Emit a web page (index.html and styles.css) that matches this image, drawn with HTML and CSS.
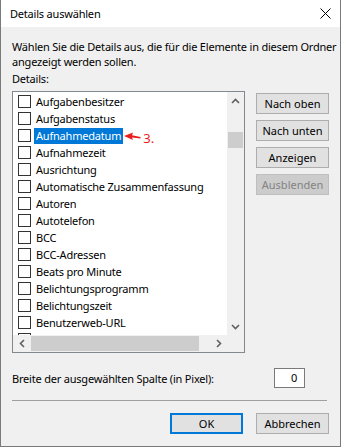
FILE: index.html
```html
<!DOCTYPE html>
<html lang="de">
<head>
<meta charset="utf-8">
<title>Details auswählen</title>
<link rel="stylesheet" href="styles.css">
</head>
<body>
<div class="window">
  <div class="titlebar">
    <span class="title">Details auswählen</span>
    <svg class="close" width="11" height="11" viewBox="0 0 11 11"><path d="M0.5 0.5 L10.5 10.5 M10.5 0.5 L0.5 10.5" stroke="#000" stroke-width="1" fill="none"/></svg>
  </div>
  <div class="content">
    <p class="intro">Wählen Sie die Details aus, die für die Elemente in diesem Ordner<br>angezeigt werden sollen.</p>
    <div class="label">Details:</div>
    <div class="main">
      <div class="list">
        <div class="items">
          <div class="row"><span class="cb"></span><span class="name">Aufgabenbesitzer</span></div>
          <div class="row"><span class="cb"></span><span class="name">Aufgabenstatus</span></div>
          <div class="row sel"><span class="cb"></span><span class="name">Aufnahmedatum</span><span class="anno"><svg width="17" height="10" viewBox="0 0 17 10"><path d="M0 4 L9 0.5 L8 3.3 L16.5 5 L16.5 6.4 L8 5.4 L9 8 Z" fill="#e8201c"/></svg><span class="anno-text">3.</span></span></div>
          <div class="row"><span class="cb"></span><span class="name">Aufnahmezeit</span></div>
          <div class="row"><span class="cb"></span><span class="name">Ausrichtung</span></div>
          <div class="row"><span class="cb"></span><span class="name">Automatische Zusammenfassung</span></div>
          <div class="row"><span class="cb"></span><span class="name">Autoren</span></div>
          <div class="row"><span class="cb"></span><span class="name">Autotelefon</span></div>
          <div class="row"><span class="cb"></span><span class="name">BCC</span></div>
          <div class="row"><span class="cb"></span><span class="name">BCC-Adressen</span></div>
          <div class="row"><span class="cb"></span><span class="name">Beats pro Minute</span></div>
          <div class="row"><span class="cb"></span><span class="name">Belichtungsprogramm</span></div>
          <div class="row"><span class="cb"></span><span class="name">Belichtungszeit</span></div>
          <div class="row"><span class="cb"></span><span class="name">Benutzerweb-URL</span></div>
          <div class="row"><span class="cb"></span></div>
        </div>
        <div class="vscroll">
          <div class="arrow"><svg width="9" height="6" viewBox="0 0 9 6"><path d="M1 5 L4.5 1.5 L8 5" stroke="#606060" stroke-width="1.6" fill="none"/></svg></div>
          <div class="vthumb"></div>
          <div class="spacer"></div>
          <div class="arrow"><svg width="9" height="6" viewBox="0 0 9 6"><path d="M1 1 L4.5 4.5 L8 1" stroke="#606060" stroke-width="1.6" fill="none"/></svg></div>
        </div>
        <div class="hscroll">
          <div class="harrow"><svg width="6" height="9" viewBox="0 0 6 9"><path d="M5 1 L1.5 4.5 L5 8" stroke="#606060" stroke-width="1.6" fill="none"/></svg></div>
          <div class="hthumb"></div>
          <div class="spacer"></div>
          <div class="harrow"><svg width="6" height="9" viewBox="0 0 6 9"><path d="M1 1 L4.5 4.5 L1 8" stroke="#606060" stroke-width="1.6" fill="none"/></svg></div>
        </div>
        <div class="corner"></div>
      </div>
      <div class="buttons">
        <button class="btn">Nach oben</button>
        <button class="btn">Nach unten</button>
        <button class="btn">Anzeigen</button>
        <button class="btn" disabled>Ausblenden</button>
      </div>
    </div>
    <div class="width-row">
      <span>Breite der ausgewählten Spalte (in Pixel):</span>
      <span class="num">0</span>
    </div>
    <div class="sep"></div>
    <div class="footer">
      <button class="btn ok">OK</button>
      <button class="btn">Abbrechen</button>
    </div>
  </div>
</div>
</body>
</html>
```
FILE: styles.css
```css
* { box-sizing: border-box; }
body {
  margin: 0;
  background: #fff;
  font-family: "Noto Sans", "Open Sans", sans-serif;
  font-size: 11px;
  letter-spacing: -0.2px;
  color: #000;
}
.window {
  width: 341px;
  height: 447px;
  border: 1px solid #7a7a7a;
  border-top: none;
  background: #f0f0f0;
}
.titlebar {
  height: 27px;
  background: #fff;
  display: flex;
  align-items: center;
  justify-content: space-between;
  padding: 0 9px 0 9px;
}
.title { line-height: 15px; }
.content { padding: 12px 11px 0 11px; }
.intro { margin: 0; line-height: 15px; white-space: nowrap; }
.label { margin-top: 2px; line-height: 15px; }
.main { display: flex; margin-top: 5px; align-items: flex-start; }
.list {
  width: 233px;
  height: 262px;
  border: 1px solid #828790;
  background: #fff;
  display: grid;
  grid-template-columns: 1fr 17px;
  grid-template-rows: 1fr 17px;
}
.items { padding: 1px 0 0 5px; overflow: hidden; }
.row {
  height: 17px;
  display: flex;
  align-items: center;
  white-space: nowrap;
}
.cb {
  flex: none;
  width: 13px;
  height: 13px;
  border: 1px solid #333;
  background: #fff;
  margin-right: 3px;
}
.name { padding: 0 2px; line-height: 16px; }
.sel .name { background: #0078d7; color: #fff; }
.anno { display: flex; align-items: center; margin-left: 1px; }
.anno svg { margin-top: 3px; }
.anno-text { color: #e8201c; font-size: 13px; letter-spacing: 0; margin-left: 2px; margin-top: 5px; }
.vscroll { background: #f0f0f0; display: flex; flex-direction: column; }
.arrow { height: 17px; display: flex; align-items: center; justify-content: center; flex: none; }
.vthumb { margin: 23px 1px 0 1px; height: 16px; background: #cdcdcd; flex: none; }
.spacer { flex: 1; }
.hscroll { background: #f0f0f0; display: flex; }
.harrow { width: 17px; display: flex; align-items: center; justify-content: center; flex: none; }
.hthumb { width: 168px; margin: 1px 0 1px 1px; background: #cdcdcd; flex: none; }
.corner { background: #f0f0f0; }
.buttons {
  margin-left: 11px;
  margin-top: 2px;
  display: flex;
  flex-direction: column;
  gap: 6px;
}
.btn {
  width: 73px;
  height: 21px;
  border: 1px solid #adadad;
  background: #e1e1e1;
  font: inherit;
  color: #000;
  padding: 0;
}
.btn:disabled { background: #cccccc; border-color: #bfbfbf; color: #838383; }
.width-row {
  display: flex;
  align-items: center;
  justify-content: space-between;
  margin-top: 15px;
  height: 20px;
  padding-right: 24px;
}
.num {
  width: 31px;
  height: 20px;
  border: 1px solid #7a7a7a;
  background: #fff;
  text-align: right;
  padding-right: 7px;
  line-height: 18px;
}
.sep { height: 1px; background: #a0a0a0; margin: 12px 2px 0 0; }
.footer {
  display: flex;
  justify-content: flex-end;
  gap: 13px;
  margin-top: 12px;
}
.ok { border: 2px solid #0078d7; }
```
